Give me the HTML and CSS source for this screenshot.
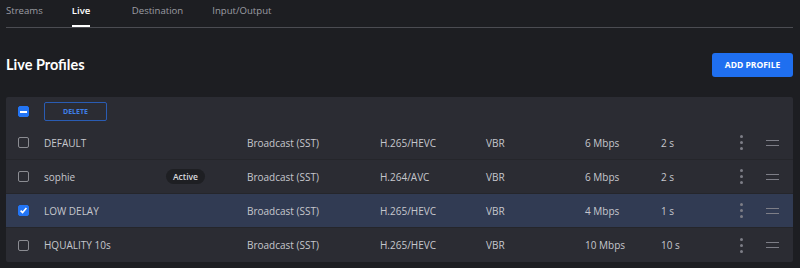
FILE: index.html
```html
<!DOCTYPE html>
<html lang="en">
<head>
    <meta charset="UTF-8">
    <title>Live Profiles</title>
    <link rel="stylesheet" href="styles.css">
</head>
<body>
    <nav class="tabs">
        <a class="tab"><span>Streams</span></a>
        <a class="tab active"><span>Live</span></a>
        <a class="tab"><span>Destination</span></a>
        <a class="tab"><span>Input/Output</span></a>
    </nav>

    <div class="page-head">
        <h1>Live Profiles</h1>
        <button class="btn-primary">ADD PROFILE</button>
    </div>

    <div class="table">
        <div class="row head">
            <span class="cb partial"></span>
            <button class="btn-outline">DELETE</button>
        </div>

        <div class="row">
            <span class="cb"></span>
            <span>DEFAULT</span>
            <span></span>
            <span>Broadcast (SST)</span>
            <span>H.265/HEVC</span>
            <span>VBR</span>
            <span>6 Mbps</span>
            <span>2 s</span>
            <span class="dots"><i></i><i></i><i></i></span>
            <span class="drag"><i></i><i></i></span>
        </div>

        <div class="row">
            <span class="cb"></span>
            <span>sophie</span>
            <span><em class="badge">Active</em></span>
            <span>Broadcast (SST)</span>
            <span>H.264/AVC</span>
            <span>VBR</span>
            <span>6 Mbps</span>
            <span>2 s</span>
            <span class="dots"><i></i><i></i><i></i></span>
            <span class="drag"><i></i><i></i></span>
        </div>

        <div class="row selected">
            <span class="cb checked">
                <svg width="9" height="9" viewBox="0 0 9 9"><path d="M1.6 4.6 L3.6 6.6 L7.4 2" fill="none" stroke="#fff" stroke-width="1.6"/></svg>
            </span>
            <span>LOW DELAY</span>
            <span></span>
            <span>Broadcast (SST)</span>
            <span>H.265/HEVC</span>
            <span>VBR</span>
            <span>4 Mbps</span>
            <span>1 s</span>
            <span class="dots"><i></i><i></i><i></i></span>
            <span class="drag"><i></i><i></i></span>
        </div>

        <div class="row">
            <span class="cb"></span>
            <span>HQUALITY 10s</span>
            <span></span>
            <span>Broadcast (SST)</span>
            <span>H.265/HEVC</span>
            <span>VBR</span>
            <span>10 Mbps</span>
            <span>10 s</span>
            <span class="dots"><i></i><i></i><i></i></span>
            <span class="drag"><i></i><i></i></span>
        </div>
    </div>
</body>
</html>
```

FILE: styles.css
```css
* {
    margin: 0;
    padding: 0;
    box-sizing: border-box;
}

body {
    font-family: "Open Sans", "Liberation Sans", sans-serif;
    background-color: #1d1e22;
    color: #c6c7cd;
    padding: 0 7px 0 6px;
    font-size: 10px;
}

.tabs {
    display: flex;
    height: 28px;
    border-bottom: 1px solid #4b4c52;
}

.tab {
    color: #9c9da3;
    font-size: 9.6px;
    min-width: 60px;
    padding-right: 29px;
}

.tab span {
    display: inline-block;
    line-height: 22px;
    height: 27px;
    border-bottom: 2px solid transparent;
}

.tab.active {
    color: #fff;
    font-weight: 600;
}

.tab.active span {
    border-bottom-color: #fff;
}

.page-head {
    display: flex;
    justify-content: space-between;
    align-items: center;
    padding-top: 24px;
    height: 49px;
}

h1 {
    color: #fff;
    font-family: Lato, "Open Sans", sans-serif;
    font-size: 14.5px;
    font-weight: 700;
}

.btn-primary {
    background: #1f6ff0;
    color: #fff;
    border: none;
    border-radius: 3px;
    width: 81px;
    height: 24px;
    font-family: inherit;
    font-size: 8.5px;
    font-weight: 700;
}

.table {
    margin-top: 20px;
    background: #2b2c33;
    border-radius: 2px;
}

.row {
    display: grid;
    grid-template-columns: 38px 122px 81px 133px 106px 99px 76px 79px 26px 1fr;
    align-items: center;
    height: 34px;
    border-bottom: 1px solid #25262b;
}

.row:last-child {
    border-bottom: none;
}

.row.head {
    height: 29px;
    border-bottom: none;
}

.row.selected {
    background: #313b53;
}

.cb {
    width: 11px;
    height: 11px;
    margin-left: 12px;
    border: 1px solid #8b8c92;
    border-radius: 2px;
    display: flex;
    align-items: center;
    justify-content: center;
}

.cb.partial,
.cb.checked {
    background: #2375f5;
    border-color: #2375f5;
}

.cb.partial::after {
    content: "";
    width: 7px;
    height: 2px;
    background: #fff;
}

.btn-outline {
    background: transparent;
    border: 1px solid #2a5cb3;
    border-radius: 2px;
    color: #3f7fe6;
    width: 63px;
    height: 19px;
    font-family: inherit;
    font-size: 7px;
    font-weight: 700;
}

.badge {
    font-style: normal;
    display: inline-block;
    background: #1e1f23;
    color: #d8d9de;
    font-size: 8.5px;
    font-weight: 600;
    padding: 0 7px;
    line-height: 15px;
    border-radius: 8px;
}

.dots {
    display: flex;
    flex-direction: column;
    gap: 3px;
}

.dots i {
    width: 3px;
    height: 3px;
    border-radius: 50%;
    background: #7d7e87;
}

.drag {
    display: flex;
    flex-direction: column;
    gap: 4px;
}

.drag i {
    width: 13px;
    height: 1px;
    background: #7d7e87;
}
```
